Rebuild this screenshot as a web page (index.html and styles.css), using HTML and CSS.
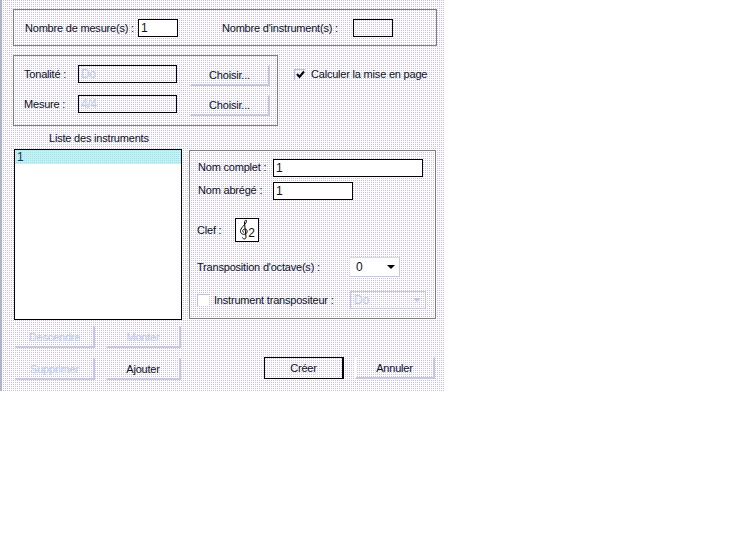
FILE: index.html
```html
<!DOCTYPE html>
<html lang="fr">
<head>
<meta charset="utf-8">
<title>Nouvelle partition</title>
<link rel="stylesheet" href="styles.css">
</head>
<body>
<main class="dialog">
  <section class="group group-top">
    <span class="label label-mesures">Nombre de mesure(s) :</span>
    <span class="field field-short">1</span>
    <span class="label label-instruments">Nombre d'instrument(s) :</span>
    <span class="field field-short field-low"></span>
  </section>

  <div class="middle">
    <section class="group group-key">
      <div class="key-row">
        <span class="label key-label">Tonalité :</span>
        <span class="field field-key disabled-text">Do</span>
        <button class="btn btn-choose" type="button">Choisir...</button>
      </div>
      <div class="key-row">
        <span class="label key-label">Mesure :</span>
        <span class="field field-key disabled-text">4/4</span>
        <button class="btn btn-choose" type="button">Choisir...</button>
      </div>
    </section>
    <div class="layout-option">
      <span class="check">
        <svg class="tick" width="9" height="9" viewBox="0 0 9 9"><path d="M1 4 L3.5 7 L8 1.5" fill="none" stroke="#000" stroke-width="2"/></svg>
      </span>
      <span class="label">Calculer la mise en page</span>
    </div>
  </div>

  <div class="instruments">
    <div class="list-col">
      <div class="list-title">Liste des instruments</div>
      <div class="listbox"><div class="list-item">1</div></div>
    </div>
    <section class="group group-detail">
      <div class="name-row">
        <span class="label name-label">Nom complet :</span>
        <span class="field field-long">1</span>
      </div>
      <div class="name-row name-row-second">
        <span class="label name-label">Nom abrégé :</span>
        <span class="field field-abbr">1</span>
      </div>
      <div class="clef-row">
        <span class="label clef-label">Clef :</span>
        <span class="clef-btn">
          <svg width="10" height="22" viewBox="0 0 10 22">
            <path d="M3.500 18.500 C4 20.500 7 20.500 7 18 L5.500 4 C5.500 1.500 7 0.500 7.500 1.500 C8.500 4 2 8 1.500 11.500 C1 14.500 4 16 6.500 15 C9 14 8.500 10 6 10 C4 10 3 12 4.500 13.500" fill="none" stroke="#000" stroke-width="1"/>
          </svg>
          <span class="clef-num">2</span>
        </span>
      </div>
      <div class="octave-row">
        <span class="label octave-label">Transposition d'octave(s) :</span>
        <span class="combo">
          <span class="combo-value">0</span>
          <span class="combo-arrow"><span class="arrow"></span></span>
        </span>
      </div>
      <div class="transposing-row">
        <span class="check check-off"></span>
        <span class="label transposing-label">Instrument transpositeur :</span>
        <span class="combo combo-disabled">
          <span class="combo-value disabled-text">Do</span>
          <span class="combo-arrow"><span class="arrow arrow-disabled"></span></span>
        </span>
      </div>
    </section>
  </div>

  <div class="footer">
    <div class="list-buttons">
      <button class="btn btn-wide disabled-text" type="button">Descendre</button>
      <button class="btn btn-narrow disabled-text" type="button">Monter</button>
      <button class="btn btn-wide disabled-text" type="button">Supprimer</button>
      <button class="btn btn-narrow" type="button">Ajouter</button>
    </div>
    <div class="main-buttons">
      <button class="btn btn-main btn-default" type="button">Créer</button>
      <button class="btn btn-main" type="button">Annuler</button>
    </div>
  </div>
</main>
</body>
</html>
```
FILE: styles.css
```css
* { box-sizing: border-box; }

html, body {
  margin: 0;
  background: #fff;
}

body {
  font-family: "Liberation Sans", Arial, sans-serif;
  font-size: 11px;
  letter-spacing: -0.2px;
  color: #111;
}

.dialog {
  width: 445px;
  height: 391px;
  padding: 9px 8px 0 11px;
  border-left: 2px solid #aeb6c4;
  background-color: #fff;
  background-image: conic-gradient(#c4c4e2 25%, #fdfdff 0 100%);
  background-size: 2px 2px;
}

.group {
  border: 1px solid #7f7f7f;
}

.label {
  white-space: nowrap;
  line-height: 14px;
}

.field {
  display: block;
  flex: none;
  height: 18px;
  padding-left: 2px;
  border: 1px solid #000;
  font-size: 12px;
  line-height: 16px;
  background: transparent;
}

.disabled-text { color: #c3cce0; }

.group-top {
  display: flex;
  align-items: center;
  height: 37px;
  padding-left: 11px;
}

.label-mesures { width: 113px; }
.field-short { width: 40px; background: #fff; }
.label-instruments { width: 131px; margin-left: 44px; }
.field-low { margin-top: 1px; background: transparent; }

.middle {
  display: flex;
  margin-top: 9px;
}

.group-key {
  display: flex;
  flex: none;
  flex-direction: column;
  gap: 10px;
  width: 265px;
  height: 71px;
  padding: 9px 0 0 10px;
}

.key-row {
  display: flex;
  align-items: flex-start;
  height: 20px;
}

.key-label { width: 54px; padding-top: 2px; }
.field-key { width: 99px; height: 18px; }

.btn {
  display: block;
  padding: 0;
  border: 0;
  border-top: 1px dotted #fff;
  border-left: 1px dotted #fff;
  border-right: 2px solid #c7c7de;
  border-bottom: 2px solid #c7c7de;
  border-radius: 0;
  background: transparent;
  font: inherit;
  letter-spacing: inherit;
  color: #111;
  line-height: 14px;
}

.btn.disabled-text { color: #c3cce0; }

.btn-choose { width: 80px; height: 21px; margin-left: 13px; }

.layout-option {
  display: flex;
  align-items: center;
  align-self: flex-start;
  margin: 12px 0 0 16px;
}

.check {
  display: flex;
  align-items: center;
  justify-content: center;
  width: 11px;
  height: 11px;
  margin-right: 6px;
  border-top: 1px solid #c0c0d4;
  border-left: 1px solid #c0c0d4;
}

.check-off {
  width: 12px;
  height: 12px;
  margin-right: 5px;
  background: #fff;
}

.instruments {
  display: flex;
  align-items: flex-start;
}

.list-col { width: 168px; margin-left: 1px; }

.list-title {
  height: 23px;
  padding-top: 5px;
  padding-left: 35px;
  white-space: nowrap;
  line-height: 14px;
}

.listbox {
  height: 171px;
  border: 1px solid #000;
  background: #fff;
}

.list-item {
  height: 14px;
  padding-left: 2px;
  font-size: 12px;
  line-height: 14px;
  color: #16365c;
  background-color: #fff;
  background-image: conic-gradient(#a4e4e6 25%, #c6eef4 0 100%);
  background-size: 2px 2px;
}

.group-detail {
  width: 247px;
  height: 169px;
  margin: 24px 0 0 7px;
  padding: 8px 0 0 8px;
}

.name-row {
  display: flex;
  align-items: center;
  height: 18px;
}

.name-row-second { margin-top: 5px; }
.name-label { width: 75px; margin-top: -2px; }
.field-long { width: 150px; background: #fff; }
.field-abbr { width: 80px; background: #fff; }

.clef-row {
  display: flex;
  align-items: center;
  height: 24px;
  margin-top: 18px;
}

.clef-label { width: 38px; margin-left: -1px; }

.clef-btn {
  display: flex;
  align-items: center;
  justify-content: center;
  width: 24px;
  height: 24px;
  border: 1px solid #000;
  background: #fff;
}

.clef-num { font-size: 12px; letter-spacing: 0; line-height: 12px; margin-top: 6px; margin-left: -1px; }

.octave-row {
  display: flex;
  align-items: center;
  height: 20px;
  margin-top: 15px;
  margin-left: -1px;
}

.octave-label { width: 153px; }

.combo {
  display: flex;
  flex: none;
  width: 50px;
  height: 20px;
  background: #fff;
  border-top: 1px solid #d8d8e6;
  border-right: 1px solid #c7c7de;
  border-bottom: 1px solid #c7c7de;
}

.combo-value {
  flex: 1;
  padding-left: 6px;
  font-size: 12px;
  line-height: 18px;
}

.combo-arrow {
  display: flex;
  align-items: center;
  justify-content: center;
  width: 17px;
}

.arrow {
  width: 0;
  height: 0;
  border-left: 4px solid transparent;
  border-right: 4px solid transparent;
  border-top: 4px solid #000;
}

.arrow-disabled { border-top-color: #c7c7de; }

.transposing-row {
  display: flex;
  align-items: center;
  height: 18px;
  margin-top: 14px;
  margin-left: -1px;
}

.transposing-label { width: 136px; }

.combo-disabled {
  width: 76px;
  height: 18px;
  background: transparent;
  border: 1px solid #c7c7de;
}

.combo-disabled .combo-value { padding-left: 3px; line-height: 16px; }

.footer {
  display: flex;
  margin: 6px 0 0 2px;
}

.list-buttons {
  display: grid;
  grid-template-columns: 80px 75px;
  grid-auto-rows: 22px;
  column-gap: 11px;
  row-gap: 10px;
  width: 166px;
}

.btn-wide, .btn-narrow { width: 100%; height: 22px; }

.main-buttons {
  display: flex;
  gap: 11px;
  margin: 31px 0 0 83px;
}

.btn-main { width: 80px; height: 22px; }

.btn-default {
  border: 1px solid #000;
  border-right: 2px solid #000;
}
```
